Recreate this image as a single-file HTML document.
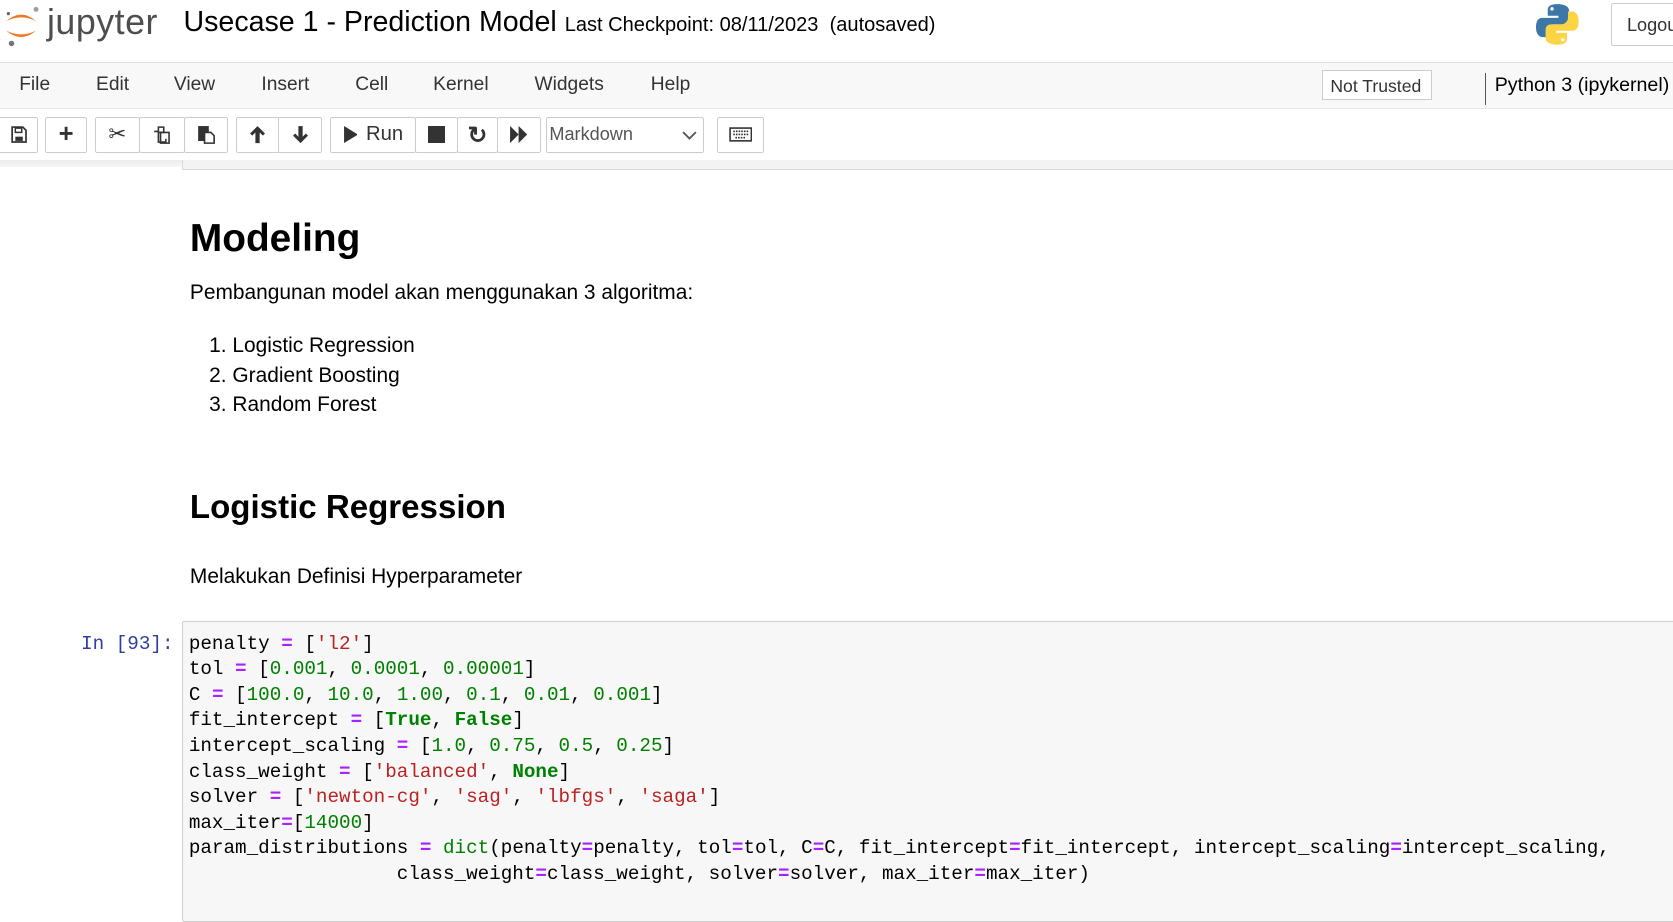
<!DOCTYPE html>
<html><head><meta charset="utf-8">
<style>
html{zoom:1.0669}
body{margin:0;width:1568px;height:820px;overflow:hidden;background:#fff;font-family:"Liberation Sans",Arial,sans-serif;color:#000;position:relative}
.abs{position:absolute}
#hdr{top:0;left:0;width:1568px;height:58px;border-bottom:1px solid #e0e0e0;background:#fff}
#menu{top:59px;left:0;width:1568px;height:42px;background:#f8f8f8;border-bottom:1px solid #e7e7e7}
.mi{position:absolute;top:10px;font-size:18px;color:#333}
.btn{position:absolute;top:110px;height:33px;border:1px solid #ccc;border-radius:2px;background:#fff;box-sizing:border-box;display:flex;align-items:center;justify-content:center;color:#333}
.code{font-family:"Liberation Mono",monospace;font-size:18.05px;line-height:24px;white-space:pre;color:#000}
.o{color:#aa22ff;font-weight:bold}.s{color:#ba2121}.n{color:#008000}.k{color:#008000;font-weight:bold}
.t{font-size:19.6px}
</style></head><body>
<div id="hdr" class="abs">
 <svg class="abs" style="left:3px;top:4px" width="34" height="40" viewBox="0 0 34 40">
  <path d="M3 16 Q17 4 31 16 Q17 9 3 16Z" fill="#f37726"/>
  <path d="M3 25 Q17 37 31 25 Q17 32 3 25Z" fill="#f37726"/>
  <circle cx="31" cy="5" r="2.3" fill="#9e9e9e"/><circle cx="8" cy="37" r="2.6" fill="#767677"/><circle cx="5" cy="9" r="1.5" fill="#616262"/>
 </svg>
 <div class="abs" style="left:44px;top:2px;font-size:33.5px;color:#4e4e4e;letter-spacing:0.5px">jupyter</div>
 <div class="abs" style="left:172px;top:6px;font-size:26.8px">Usecase 1 - Prediction Model <span style="font-size:18.8px">Last Checkpoint: 08/11/2023 &nbsp;(autosaved)</span></div>
 <svg class="abs" style="left:1440px;top:3px" width="40" height="40" viewBox="0 0 40 40">
  <path d="M20 1c-9 0-9 4-9 6v5h10v2H6c-4 0-6 3-6 9s3 9 6 9h4v-6c0-3 3-6 6-6h10c3 0 5-2 5-5V7c0-3-3-6-11-6z" fill="#3d77a8"/>
  <path d="M20 39c9 0 9-4 9-6v-5H19v-2h15c4 0 6-3 6-9s-3-9-6-9h-4v6c0 3-3 6-6 6H14c-3 0-5 2-5 5v8c0 3 3 6 11 6z" fill="#fdd443"/>
  <circle cx="15" cy="5.5" r="1.6" fill="#fff"/><circle cx="25" cy="34.5" r="1.6" fill="#fff"/>
 </svg>
 <div class="abs" style="left:1510px;top:3px;width:80px;height:40px;border:1px solid #ccc;border-radius:2px;box-sizing:border-box;font-size:17px;padding:10px 0 0 14px;color:#333">Logout</div>
</div>
<div id="menu" class="abs">
 <span class="mi" style="left:18px">File</span><span class="mi" style="left:90px">Edit</span><span class="mi" style="left:163px">View</span><span class="mi" style="left:245px">Insert</span><span class="mi" style="left:333px">Cell</span><span class="mi" style="left:406px">Kernel</span><span class="mi" style="left:501px">Widgets</span><span class="mi" style="left:610px">Help</span>
 <div class="abs" style="left:1239px;top:7px;width:103px;height:28px;border:1px solid #ccc;background:#fff;box-sizing:border-box;font-size:16.5px;color:#333;padding:4px 0 0 7px">Not Trusted</div>
 <div class="abs" style="left:1392px;top:9px;width:1px;height:30px;background:#555"></div>
 <span class="mi" style="left:1401px;color:#000;font-size:18.4px">Python 3 (ipykernel)</span>
</div>
<!-- toolbar -->
<div class="btn" style="left:-2px;width:38px"><svg width="16" height="16" viewBox="0 0 16 16"><path d="M2 1h10l3 3v11H2z" fill="none" stroke="#333" stroke-width="1.6"/><rect x="5" y="2" width="6" height="4" fill="none" stroke="#333" stroke-width="1.4"/><rect x="5" y="10" width="7" height="4" fill="#333"/></svg></div>
<div class="btn" style="left:42px;width:40px;font-size:24px;font-weight:bold">+</div>
<div class="btn" style="left:89px;width:42px;font-size:20px">✂</div>
<div class="btn" style="left:130px;width:43px"><svg width="18" height="18" viewBox="0 0 18 18"><path d="M6 2h5v5H6zM2 6h4v10h7v-3" fill="none" stroke="#333" stroke-width="1.5"/><path d="M8 7h8v10H8z" fill="none" stroke="#333" stroke-width="1.5"/></svg></div>
<div class="btn" style="left:172px;width:42px"><svg width="18" height="18" viewBox="0 0 18 18"><rect x="2" y="1" width="10" height="14" fill="#333"/><path d="M8 7h6l3 3v7H8z" fill="#fff" stroke="#333" stroke-width="1.5"/></svg></div>
<div class="btn" style="left:221px;width:41px"><svg width="16" height="18" viewBox="0 0 16 18"><path d="M8 1L1 8l2 2 3-3v10h4V7l3 3 2-2z" fill="#333"/></svg></div>
<div class="btn" style="left:261px;width:41px"><svg width="16" height="18" viewBox="0 0 16 18"><path d="M8 17L1 10l2-2 3 3V1h4v10l3-3 2 2z" fill="#333"/></svg></div>
<div class="btn" style="left:309px;width:81px;font-size:19px"><svg width="14" height="16" viewBox="0 0 14 16" style="margin-right:8px"><path d="M1 0L14 8 1 16z" fill="#333"/></svg>Run</div>
<div class="btn" style="left:389px;width:40px"><div style="width:16px;height:16px;background:#333"></div></div>
<div class="btn" style="left:428px;width:39px;font-size:22px;font-weight:bold">↻</div>
<div class="btn" style="left:466px;width:41px"><svg width="18" height="16" viewBox="0 0 18 16"><path d="M1 0l8 8-8 8zM9 0l8 8-8 8z" fill="#333"/></svg></div>
<div class="btn" style="left:512px;width:148px;justify-content:space-between;padding:0 6px 0 2px;font-size:17px;color:#555">Markdown<svg width="14" height="10" viewBox="0 0 14 10"><path d="M1 2l6 6 6-6" fill="none" stroke="#555" stroke-width="1.8"/></svg></div>
<div class="btn" style="left:672px;width:44px"><svg width="22" height="14" viewBox="0 0 22 14"><rect x="1" y="1" width="20" height="12" fill="none" stroke="#333" stroke-width="1.5"/><path d="M4 4h14M4 7h14M6 10h10" stroke="#333" stroke-width="1.5" stroke-dasharray="1.5 1"/></svg></div>
<!-- notebook -->
<div class="abs" style="left:0;top:150px;width:1568px;height:7px;background:linear-gradient(#ececec,#f6f6f6)"></div>
<div class="abs" style="left:171px;top:150px;width:1400px;height:8px;border-left:1px solid #d8d8d8;border-bottom:1px solid #d8d8d8;background:#f3f3f3"></div>
<div class="abs" style="left:178px;top:203px;font-size:36.4px;font-weight:bold">Modeling</div>
<div class="abs t" style="left:178px;top:263px">Pembangunan model akan menggunakan 3 algoritma:</div>
<div class="abs t" style="left:196px;top:310px;line-height:28px">1. Logistic Regression<br>2. Gradient Boosting<br>3. Random Forest</div>
<div class="abs" style="left:178px;top:458px;font-size:31px;font-weight:bold">Logistic Regression</div>
<div class="abs t" style="left:178px;top:530px">Melakukan Definisi Hyperparameter</div>
<div class="abs code" style="left:76px;top:592px;color:#303f9f">In [93]:</div>
<div class="abs" style="left:171px;top:582px;width:1420px;height:280px;background:#f7f7f7;border:1px solid #cfcfcf;border-radius:2px"></div>
<div class="abs code" style="left:177px;top:592px">penalty <span class="o">=</span> [<span class="s">'l2'</span>]
tol <span class="o">=</span> [<span class="n">0.001</span>, <span class="n">0.0001</span>, <span class="n">0.00001</span>]
C <span class="o">=</span> [<span class="n">100.0</span>, <span class="n">10.0</span>, <span class="n">1.00</span>, <span class="n">0.1</span>, <span class="n">0.01</span>, <span class="n">0.001</span>]
fit_intercept <span class="o">=</span> [<span class="k">True</span>, <span class="k">False</span>]
intercept_scaling <span class="o">=</span> [<span class="n">1.0</span>, <span class="n">0.75</span>, <span class="n">0.5</span>, <span class="n">0.25</span>]
class_weight <span class="o">=</span> [<span class="s">'balanced'</span>, <span class="k">None</span>]
solver <span class="o">=</span> [<span class="s">'newton-cg'</span>, <span class="s">'sag'</span>, <span class="s">'lbfgs'</span>, <span class="s">'saga'</span>]
max_iter<span class="o">=</span>[<span class="n">14000</span>]
param_distributions <span class="o">=</span> <span class="n">dict</span>(penalty<span class="o">=</span>penalty, tol<span class="o">=</span>tol, C<span class="o">=</span>C, fit_intercept<span class="o">=</span>fit_intercept, intercept_scaling<span class="o">=</span>intercept_scaling,
                  class_weight<span class="o">=</span>class_weight, solver<span class="o">=</span>solver, max_iter<span class="o">=</span>max_iter)</div>
</body></html>
